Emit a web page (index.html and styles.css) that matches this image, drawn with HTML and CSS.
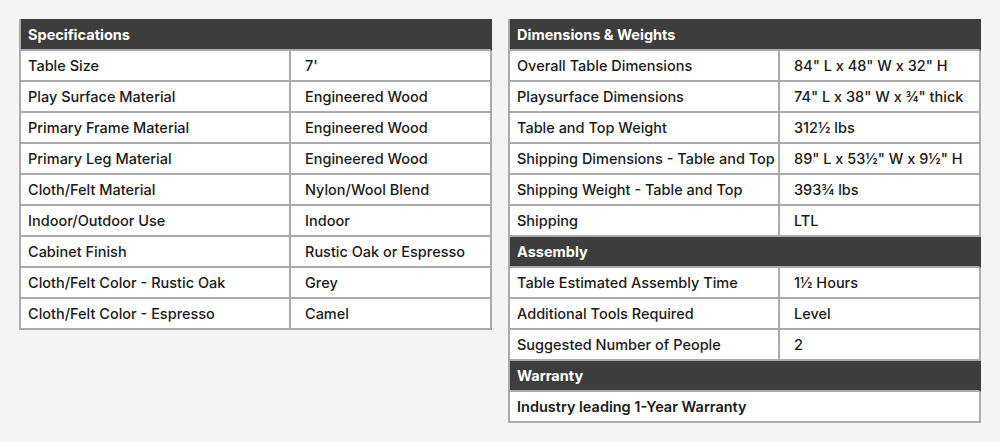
FILE: index.html
```html
<!DOCTYPE html>
<html>
<head>
<meta charset="utf-8">
<link rel="stylesheet" href="styles.css">
</head>
<body>
<div class="page">
  <table class="spec">
    <colgroup><col class="c1"><col class="c2"></colgroup>
    <tr class="head"><th colspan="2">Specifications</th></tr>
    <tr><td class="k">Table Size</td><td class="v">7'</td></tr>
    <tr><td class="k">Play Surface Material</td><td class="v">Engineered Wood</td></tr>
    <tr><td class="k">Primary Frame Material</td><td class="v">Engineered Wood</td></tr>
    <tr><td class="k">Primary Leg Material</td><td class="v">Engineered Wood</td></tr>
    <tr><td class="k">Cloth/Felt Material</td><td class="v">Nylon/Wool Blend</td></tr>
    <tr><td class="k">Indoor/Outdoor Use</td><td class="v">Indoor</td></tr>
    <tr><td class="k">Cabinet Finish</td><td class="v">Rustic Oak or Espresso</td></tr>
    <tr><td class="k">Cloth/Felt Color - Rustic Oak</td><td class="v">Grey</td></tr>
    <tr><td class="k">Cloth/Felt Color - Espresso</td><td class="v">Camel</td></tr>
  </table>
  <table class="spec">
    <colgroup><col class="c1"><col class="c2"></colgroup>
    <tr class="head"><th colspan="2">Dimensions &amp; Weights</th></tr>
    <tr><td class="k">Overall Table Dimensions</td><td class="v">84" L x 48" W x 32" H</td></tr>
    <tr><td class="k">Playsurface Dimensions</td><td class="v">74" L x 38" W x ¾" thick</td></tr>
    <tr><td class="k">Table and Top Weight</td><td class="v">312½ lbs</td></tr>
    <tr><td class="k">Shipping Dimensions - Table and Top</td><td class="v">89" L x 53½" W x 9½" H</td></tr>
    <tr><td class="k">Shipping Weight - Table and Top</td><td class="v">393¾ lbs</td></tr>
    <tr><td class="k">Shipping</td><td class="v">LTL</td></tr>
    <tr class="head"><th colspan="2">Assembly</th></tr>
    <tr><td class="k">Table Estimated Assembly Time</td><td class="v">1½ Hours</td></tr>
    <tr><td class="k">Additional Tools Required</td><td class="v">Level</td></tr>
    <tr><td class="k">Suggested Number of People</td><td class="v">2</td></tr>
    <tr class="head"><th colspan="2">Warranty</th></tr>
    <tr><td class="k full" colspan="2">Industry leading 1-Year Warranty</td></tr>
  </table>
</div>
</body>
</html>
```
FILE: styles.css
```css
html, body {
  margin: 0;
  padding: 0;
  background: #f4f4f4;
}
.page {
  display: flex;
  align-items: flex-start;
  gap: 16px;
  padding: 19px 0 0 19px;
  font-family: Inter, "Liberation Sans", sans-serif;
  font-weight: 500;
  font-size: 14.5px;
  color: #1a1a1a;
}
.spec {
  width: 473px;
  border-collapse: separate;
  border-spacing: 0;
  table-layout: fixed;
  background: #fff;
  border-left: 2px solid #ababab;
}
.spec .c1 {
  width: 270px;
}
.spec th, .spec td {
  padding: 0;
  line-height: 29px;
  text-align: left;
  white-space: nowrap;
  overflow: hidden;
  border-bottom: 2px solid #ababab;
  border-right: 2px solid #ababab;
}
.spec tr.head:first-of-type th {
  border-top: 2px solid #3d3d3d;
  line-height: 28px;
}
.spec .head th {
  background: #3d3d3d;
  color: #fff;
  font-weight: 700;
  padding-left: 7px;
  border-right-color: #3d3d3d;
}
.spec .k {
  padding-left: 7px;
}
.spec .v {
  padding-left: 14px;
}
.spec .full {
  font-weight: 600;
}
```
